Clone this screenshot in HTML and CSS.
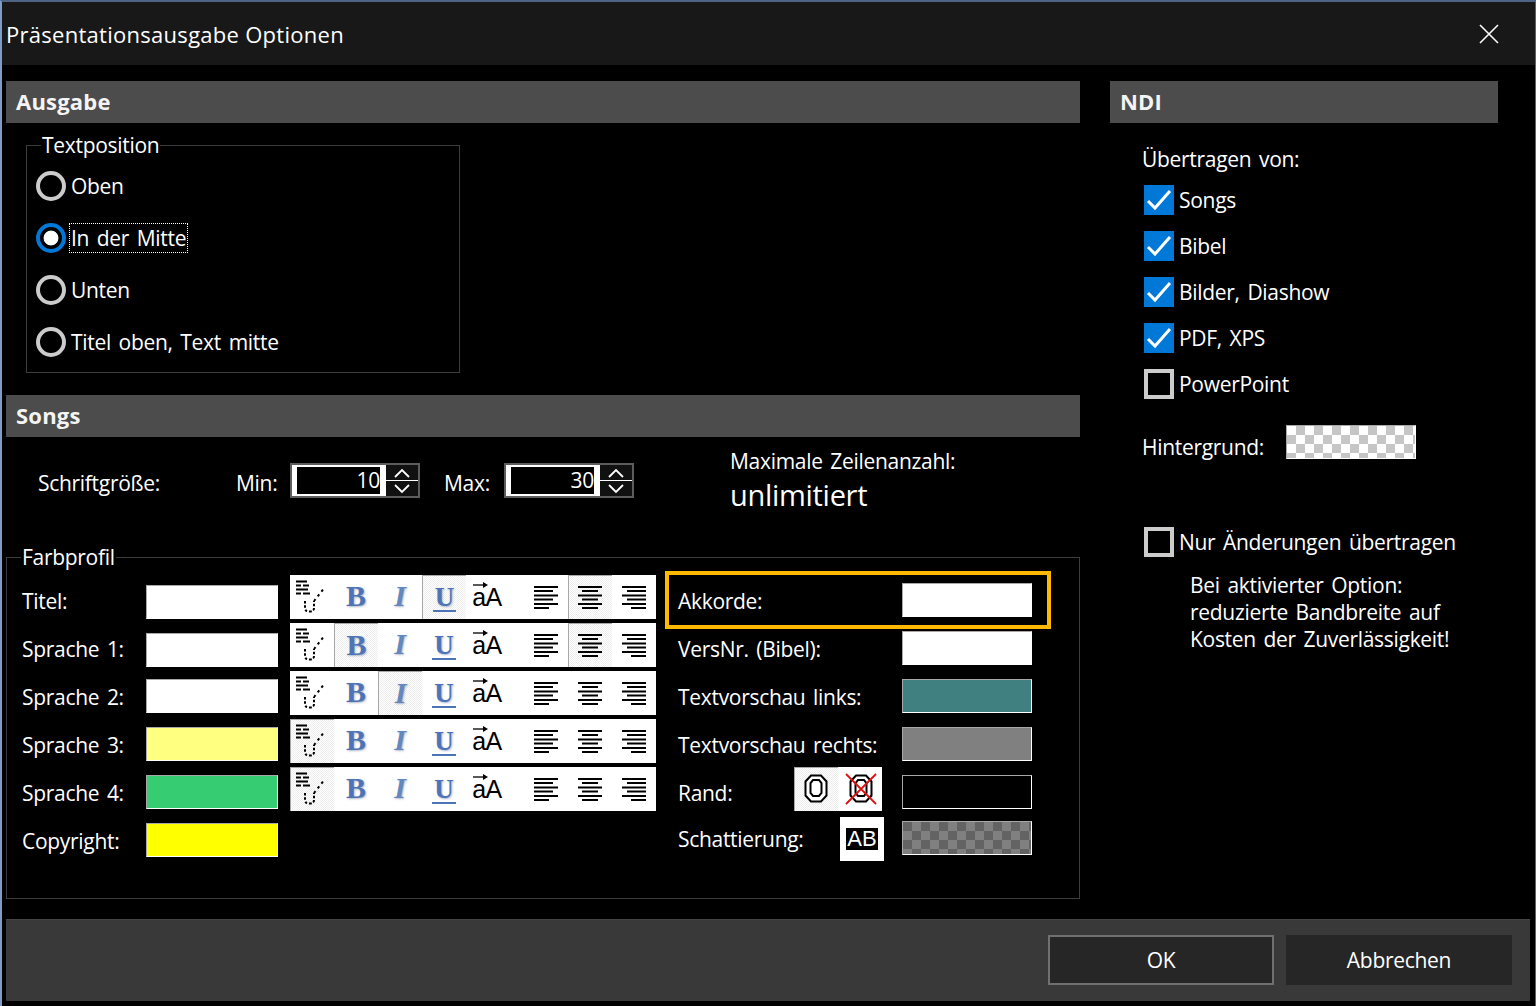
FILE: index.html
```html
<!DOCTYPE html>
<html lang="de">
<head>
  <meta charset="UTF-8" />
  <title>Präsentationsausgabe Optionen</title>
  <link rel="stylesheet" href="styles.css">
</head>
<body>
  <svg class="defs" width="0" height="0">
    <symbol id="chord" viewBox="0 0 44 44">
      <path d="M6 6.500h11M6 10.500h5M13 10.500h6M6 14.500h12M6 18.500h5M13 18.500h7" stroke="#000" stroke-width="2" fill="none"/>
      <path d="M15 26v7q0 3.500 4.500 3.500t4.500-3.500v-7" stroke="#000" stroke-width="2" stroke-dasharray="2.500 1.800" fill="none"/>
      <path d="M24 26L35 12" stroke="#000" stroke-width="2" stroke-dasharray="2.500 3.500" fill="none"/>
    </symbol>
    <symbol id="left" viewBox="0 0 44 44">
      <path d="M10 12h24M10 16h19M10 20.500h24M10 24.500h19M10 29h24M10 33h15" stroke="#000" stroke-width="2"/>
    </symbol>
    <symbol id="center" viewBox="0 0 44 44">
      <path d="M10 12h24M14 16h16M10 20.500h24M14 24.500h16M10 29h24M14 33h16" stroke="#000" stroke-width="2"/>
    </symbol>
    <symbol id="right" viewBox="0 0 44 44">
      <path d="M10 12h24M15 16h19M10 20.500h24M15 24.500h19M10 29h24M19 33h15" stroke="#000" stroke-width="2"/>
    </symbol>
    <symbol id="arrow" viewBox="0 0 16 6">
      <path d="M0 3h12" stroke="#000" stroke-width="1.300"/>
      <path d="M10 0l5 3-5 3z" fill="#000"/>
    </symbol>
    <symbol id="up" viewBox="0 0 16 10"><path d="M1 9l7-7 7 7" stroke="#fff" stroke-width="1.800" fill="none"/></symbol>
    <symbol id="down" viewBox="0 0 16 10"><path d="M1 1l7 7 7-7" stroke="#fff" stroke-width="1.800" fill="none"/></symbol>
    <symbol id="tick" viewBox="0 0 30 30"><path d="M4 16l7 7L26 6" stroke="#fff" stroke-width="3" fill="none"/></symbol>
    <symbol id="outline" viewBox="0 0 44 44">
      <path d="M17 8.500h10l5.500 6v14l-5.500 6H17l-5.500-6v-14z" stroke="#000" stroke-width="2" fill="#fff"/>
      <path d="M19 13h6l2.500 3v10l-2.500 3h-6l-2.500-3V16z" stroke="#000" stroke-width="2" fill="#fff"/>
    </symbol>
  </svg>

  <div class="window">
    <div class="titlebar">
      <span>Präsentationsausgabe Optionen</span>
      <svg class="close" viewBox="0 0 20 20"><path d="M1 1l18 18M19 1L1 19" stroke="#fff" stroke-width="1.600"/></svg>
    </div>

    <div class="main">
      <div class="left">
        <div class="head">Ausgabe</div>
        <fieldset class="group textpos">
          <legend>Textposition</legend>
          <div class="radio-row"><span class="radio"></span><span>Oben</span></div>
          <div class="radio-row"><span class="radio on"></span><span class="focus">In der Mitte</span></div>
          <div class="radio-row"><span class="radio"></span><span>Unten</span></div>
          <div class="radio-row"><span class="radio"></span><span>Titel oben, Text mitte</span></div>
        </fieldset>

        <div class="head songs-head">Songs</div>
        <div class="size-row">
          <span class="size-label">Schriftgröße:</span>
          <span class="min-label">Min:</span>
          <div class="spinner">
            <div class="spin-value">10</div>
            <div class="spin-btns">
              <svg class="chev"><use href="#up"/></svg>
              <svg class="chev"><use href="#down"/></svg>
            </div>
          </div>
          <span class="max-label">Max:</span>
          <div class="spinner">
            <div class="spin-value">30</div>
            <div class="spin-btns">
              <svg class="chev"><use href="#up"/></svg>
              <svg class="chev"><use href="#down"/></svg>
            </div>
          </div>
          <div class="lines">
            <div>Maximale Zeilenanzahl:</div>
            <div class="lines-value">unlimitiert</div>
          </div>
        </div>

        <fieldset class="group profile">
          <legend>Farbprofil</legend>
          <div class="profile-body">
            <div class="col-colors">
              <div class="color-row up"><span>Titel:</span><span class="swatch white"></span></div>
              <div class="color-row up tight"><span>Sprache 1:</span><span class="swatch white"></span></div>
              <div class="color-row"><span>Sprache 2:</span><span class="swatch white"></span></div>
              <div class="color-row"><span>Sprache 3:</span><span class="swatch pale"></span></div>
              <div class="color-row"><span>Sprache 4:</span><span class="swatch green"></span></div>
              <div class="color-row"><span>Copyright:</span><span class="swatch yellow"></span></div>
            </div>

            <div class="col-tools">
              <div class="toolbar">
                <span class="tb"><svg class="ico"><use href="#chord"/></svg></span>
                <span class="tb"><span class="g-b">B</span></span>
                <span class="tb"><span class="g-i">I</span></span>
                <span class="tb active"><span class="g-u">U</span></span>
                <span class="tb"><svg class="g-arrow"><use href="#arrow"/></svg><span class="g-a">aA</span></span>
                <span class="tb sep"><svg class="ico"><use href="#left"/></svg></span>
                <span class="tb active"><svg class="ico"><use href="#center"/></svg></span>
                <span class="tb"><svg class="ico"><use href="#right"/></svg></span>
              </div>
              <div class="toolbar">
                <span class="tb"><svg class="ico"><use href="#chord"/></svg></span>
                <span class="tb active"><span class="g-b">B</span></span>
                <span class="tb"><span class="g-i">I</span></span>
                <span class="tb"><span class="g-u">U</span></span>
                <span class="tb"><svg class="g-arrow"><use href="#arrow"/></svg><span class="g-a">aA</span></span>
                <span class="tb sep"><svg class="ico"><use href="#left"/></svg></span>
                <span class="tb active"><svg class="ico"><use href="#center"/></svg></span>
                <span class="tb"><svg class="ico"><use href="#right"/></svg></span>
              </div>
              <div class="toolbar">
                <span class="tb"><svg class="ico"><use href="#chord"/></svg></span>
                <span class="tb"><span class="g-b">B</span></span>
                <span class="tb active"><span class="g-i">I</span></span>
                <span class="tb"><span class="g-u">U</span></span>
                <span class="tb"><svg class="g-arrow"><use href="#arrow"/></svg><span class="g-a">aA</span></span>
                <span class="tb sep"><svg class="ico"><use href="#left"/></svg></span>
                <span class="tb"><svg class="ico"><use href="#center"/></svg></span>
                <span class="tb"><svg class="ico"><use href="#right"/></svg></span>
              </div>
              <div class="toolbar">
                <span class="tb active"><svg class="ico"><use href="#chord"/></svg></span>
                <span class="tb"><span class="g-b">B</span></span>
                <span class="tb"><span class="g-i">I</span></span>
                <span class="tb"><span class="g-u">U</span></span>
                <span class="tb"><svg class="g-arrow"><use href="#arrow"/></svg><span class="g-a">aA</span></span>
                <span class="tb sep"><svg class="ico"><use href="#left"/></svg></span>
                <span class="tb"><svg class="ico"><use href="#center"/></svg></span>
                <span class="tb"><svg class="ico"><use href="#right"/></svg></span>
              </div>
              <div class="toolbar">
                <span class="tb active"><svg class="ico"><use href="#chord"/></svg></span>
                <span class="tb"><span class="g-b">B</span></span>
                <span class="tb"><span class="g-i">I</span></span>
                <span class="tb"><span class="g-u">U</span></span>
                <span class="tb"><svg class="g-arrow"><use href="#arrow"/></svg><span class="g-a">aA</span></span>
                <span class="tb sep"><svg class="ico"><use href="#left"/></svg></span>
                <span class="tb"><svg class="ico"><use href="#center"/></svg></span>
                <span class="tb"><svg class="ico"><use href="#right"/></svg></span>
              </div>
            </div>

            <div class="col-extra">
              <div class="extra-row highlight"><span>Akkorde:</span><span class="swatch small white"></span></div>
              <div class="extra-row first"><span>VersNr. (Bibel):</span><span class="swatch small white"></span></div>
              <div class="extra-row"><span>Textvorschau links:</span><span class="swatch small teal"></span></div>
              <div class="extra-row"><span>Textvorschau rechts:</span><span class="swatch small gray"></span></div>
              <div class="extra-row">
                <span>Rand:</span>
                <span class="rand-btns">
                  <span class="tb active"><svg class="ico"><use href="#outline"/></svg></span>
                  <span class="tb crossed"><svg class="ico"><use href="#outline"/></svg><svg class="cross" viewBox="0 0 32 32"><path d="M1 1l30 30M31 1L1 31" stroke="#e01010" stroke-width="1.800"/></svg></span>
                </span>
                <span class="swatch small black"></span>
              </div>
              <div class="extra-row tight-top">
                <span>Schattierung:</span>
                <span class="tb shade-btn"><span class="ab">AB</span></span>
                <span class="swatch small checker-dark"></span>
              </div>
            </div>
          </div>
        </fieldset>
      </div>

      <div class="right">
        <div class="head">NDI</div>
        <div class="ndi">
          <div class="from">Übertragen von:</div>
          <div class="check-row first"><span class="check on"><svg class="tick"><use href="#tick"/></svg></span><span>Songs</span></div>
          <div class="check-row"><span class="check on"><svg class="tick"><use href="#tick"/></svg></span><span>Bibel</span></div>
          <div class="check-row"><span class="check on"><svg class="tick"><use href="#tick"/></svg></span><span>Bilder, Diashow</span></div>
          <div class="check-row"><span class="check on"><svg class="tick"><use href="#tick"/></svg></span><span>PDF, XPS</span></div>
          <div class="check-row"><span class="check"></span><span>PowerPoint</span></div>
          <div class="bg-row"><span>Hintergrund:</span><span class="swatch small checker-light"></span></div>
          <div class="check-row only"><span class="check"></span><span>Nur Änderungen übertragen</span></div>
          <div class="note">Bei aktivierter Option:<br>reduzierte Bandbreite auf<br>Kosten der Zuverlässigkeit!</div>
        </div>
      </div>
    </div>

    <div class="footer">
      <button class="btn default">OK</button>
      <button class="btn">Abbrechen</button>
    </div>
  </div>
</body>
</html>
```

FILE: styles.css
```css
html, body {
  margin: 0;
  height: 100%;
  background: #000;
}
body {
  font-family: "Open Sans", "Noto Sans", sans-serif;
  font-size: 21px;
  letter-spacing: -0.3px;
  word-spacing: 2.5px;
  color: #fff;
  overflow: hidden;
}
.defs {
  position: absolute;
}
.window {
  height: 1006px;
  box-sizing: border-box;
  display: flex;
  flex-direction: column;
  background: #000;
  border-top: 2px solid #4f6485;
  border-left: 2px solid #7d9cc6;
  border-right: 1px solid #4f6485;
}
.titlebar {
  height: 63px;
  flex: none;
  display: flex;
  align-items: center;
  justify-content: space-between;
  padding: 0 36px 0 4px;
  background: #181818;
  font-size: 22px;
  letter-spacing: 0.28px;
  word-spacing: 0;
}
.close {
  width: 20px;
  height: 20px;
}
.main {
  display: flex;
  gap: 30px;
  padding: 16px 0 0 4px;
}
.left {
  width: 1074px;
}
.right {
  width: 388px;
}
.head {
  height: 42px;
  line-height: 40px;
  padding-left: 10px;
  background: #4c4c4c;
  font-weight: 700;
  font-size: 22px;
  letter-spacing: 0.2px;
  color: #f4f4f4;
}
.songs-head {
  margin-top: 22px;
}

/* group boxes */
.group {
  margin: 0;
  padding: 0;
  border: 1px solid #3c3c3c;
  box-sizing: border-box;
}
.group legend {
  margin-left: 14px;
  padding: 0 1px;
  line-height: 28px;
}
.textpos {
  width: 434px;
  height: 242px;
  margin: 8px 0 0 20px;
  padding: 1px 0 0 9px;
}
.textpos legend {
  margin-left: 5px;
}
.radio-row {
  height: 52px;
  display: flex;
  align-items: center;
  gap: 5px;
}
.radio {
  width: 30px;
  height: 30px;
  box-sizing: border-box;
  border: 4px solid #ccc;
  border-radius: 50%;
  flex: none;
}
.radio.on {
  border-color: #0078d7;
  background: radial-gradient(circle, #fff 0 7px, #000 7.8px);
}
.focus {
  outline: 1px dotted #fff;
  line-height: 28px;
  padding: 0 1px;
  margin-left: -1px;
}

/* size row */
.size-row {
  height: 92px;
  display: flex;
  align-items: center;
  padding-left: 32px;
  margin-bottom: 14px;
}
.size-label {
  width: 198px;
}
.min-label {
  width: 54px;
}
.max-label {
  width: 60px;
  margin-left: 24px;
}
.spinner {
  width: 130px;
  height: 35px;
  margin-top: -5px;
  box-sizing: border-box;
  border: 2px solid #5c5c5c;
  display: flex;
  flex: none;
}
.spin-value {
  width: 94px;
  box-sizing: border-box;
  border: solid #fff;
  border-width: 2px 6px 2px 5px;
  background: #000;
  line-height: 27px;
  text-align: right;
}
.spin-btns {
  flex: 1;
  display: flex;
  flex-direction: column;
  justify-content: space-between;
  align-items: center;
  background: #111;
  background-image: linear-gradient(#fff, #fff);
  background-size: 100% 1px;
  background-position: 0 50%;
  background-repeat: no-repeat;
  padding: 3px 0 2px;
}
.chev {
  width: 16px;
  height: 10px;
}
.lines {
  align-self: flex-start;
  margin: 7px 0 0 96px;
  line-height: 34px;
}
.lines-value {
  font-size: 29px;
}

/* farbprofil */
.profile {
  height: 356px;
}
.profile-body {
  display: flex;
}
.col-colors {
  width: 283px;
  box-sizing: border-box;
  padding: 14px 0 0 15px;
}
.color-row {
  height: 34px;
  margin-bottom: 14px;
  display: flex;
  align-items: center;
  justify-content: space-between;
  padding-right: 12px;
}
.color-row > span:first-child {
  padding-top: 2px;
}
.color-row.up > span:first-child {
  padding: 0 0 2px;
}
.color-row.tight {
  margin-bottom: 12px;
}
.swatch {
  width: 132px;
  height: 34px;
  box-sizing: border-box;
  flex: none;
  border: 1px solid #fff;
  border-top-color: #a8a8a8;
  border-left-color: #a8a8a8;
}
.swatch.small {
  width: 130px;
}
.white { background: #fff; }
.pale { background: #ffff80; }
.green { background: #36cc72; }
.yellow { background: #ffff00; }
.teal { background: #408080; }
.gray { background: #808080; }
.black { background: #000; }
.checker-dark {
  background: repeating-conic-gradient(#808080 0 25%, #636363 0 50%) 0 0 / 18px 18px;
}
.checker-light {
  background: repeating-conic-gradient(#c6c6c6 0 25%, #fff 0 50%) 0 0 / 18px 18px;
}

.col-tools {
  width: 366px;
  padding-top: 4px;
  display: flex;
  flex-direction: column;
  gap: 4px;
}
.toolbar {
  display: flex;
  height: 44px;
  background: #fff;
}
.tb {
  width: 44px;
  height: 44px;
  box-sizing: border-box;
  flex: none;
  background: #fff;
  color: #000;
  display: flex;
  align-items: center;
  justify-content: center;
  position: relative;
  letter-spacing: 0;
}
.tb.active {
  border-top: 1px solid #a8a8a8;
  border-left: 1px solid #a8a8a8;
  background: repeating-conic-gradient(#ededed 0 25%, #fff 0 50%) 0 0 / 2px 2px;
}
.tb.sep {
  margin-left: 14px;
}
.ico {
  width: 44px;
  height: 44px;
  flex: none;
}
.tb.active .ico {
  margin: -1px 0 0 -1px;
}
.g-b, .g-i, .g-u {
  font-family: "Liberation Serif", serif;
  font-size: 30px;
  line-height: 44px;
  margin-top: -2px;
  color: #4e74b6;
  text-shadow: 1px 1px 2px rgba(70, 90, 130, 0.45);
}
.g-b { font-weight: 700; }
.g-i { font-style: italic; font-weight: 700; color: #6488bd; }
.g-u {
  font-weight: 700;
  font-size: 27px;
  line-height: 26px;
  border-bottom: 2px solid #4e74b6;
  padding: 0 2px;
  margin-top: 1px;
}
.g-a {
  font-family: "Liberation Sans", sans-serif;
  font-size: 25px;
  letter-spacing: -0.5px;
  margin: 1px 0 0 -2px;
}
.g-arrow {
  position: absolute;
  top: 7px;
  left: 7px;
  width: 16px;
  height: 6px;
}

.col-extra {
  width: 386px;
  margin-left: 9px;
}
.extra-row {
  height: 34px;
  margin-bottom: 14px;
  display: flex;
  align-items: center;
  padding: 0 19px 0 13px;
}
.extra-row > span:first-child {
  margin-right: auto;
  padding-top: 2px;
}
.extra-row.highlight {
  height: 58px;
  box-sizing: border-box;
  margin-bottom: 0;
  border: 4px solid #ffb900;
  padding: 0 15px 0 9px;
}
.extra-row.first {
  margin-top: 2px;
}
.extra-row.tight-top {
  margin-top: -2px;
}
.rand-btns {
  display: flex;
  margin: -6px 20px 0 0;
}
.shade-btn {
  margin: 2px 18px 0 0;
}
.crossed .ico {
  transform: translate(1px, 0);
}
.cross {
  position: absolute;
  left: 7px;
  top: 6px;
  width: 32px;
  height: 32px;
}
.ab {
  width: 32px;
  height: 22px;
  background: #000;
  color: #fff;
  font-family: "Liberation Sans", sans-serif;
  font-size: 22px;
  line-height: 22px;
  text-align: center;
}

/* ndi */
.ndi {
  padding-left: 32px;
}
.from {
  margin-top: 22px;
  line-height: 28px;
}
.check-row {
  height: 46px;
  display: flex;
  align-items: center;
  gap: 5px;
  padding-left: 2px;
}
.check-row.first {
  margin-top: 4px;
}
.check-row.only {
  margin-top: 60px;
}
.check {
  width: 30px;
  height: 30px;
  box-sizing: border-box;
  border: 4px solid #ccc;
  flex: none;
}
.check.on {
  border: 0;
  background: #0078d7;
}
.tick {
  display: block;
  width: 30px;
  height: 30px;
}
.bg-row {
  width: 274px;
  height: 34px;
  margin-top: 18px;
  display: flex;
  align-items: center;
  justify-content: space-between;
}
.bg-row > span:first-child {
  padding-top: 10px;
}
.note {
  margin: 7px 0 0 48px;
  line-height: 27px;
}

/* footer */
.footer {
  margin: auto 5px 5px 4px;
  height: 82px;
  box-sizing: border-box;
  padding: 15px 18px;
  background: #393939;
  border-top: 1px solid #444;
  display: flex;
  justify-content: flex-end;
  gap: 12px;
}
.btn {
  width: 226px;
  height: 50px;
  background: #262626;
  color: #fff;
  border: 2px solid #262626;
  font: inherit;
  letter-spacing: inherit;
  padding: 0;
}
.btn.default {
  border-color: #707070;
}
```
